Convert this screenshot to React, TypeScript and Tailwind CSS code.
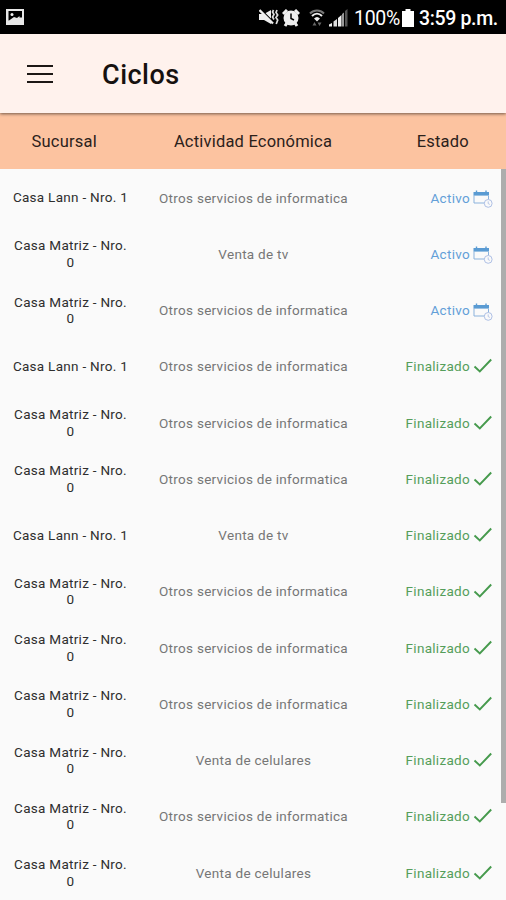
type Status = "Activo" | "Finalizado";

type Cycle = {
  branch: string;
  activity: string;
  status: Status;
};

const LANN = "Casa Lann - Nro. 1";
const MATRIZ = "Casa Matriz - Nro. 0";
const IT = "Otros servicios de informatica";
const TV = "Venta de tv";
const PHONES = "Venta de celulares";

const cycles: Cycle[] = [
  { branch: LANN, activity: IT, status: "Activo" },
  { branch: MATRIZ, activity: TV, status: "Activo" },
  { branch: MATRIZ, activity: IT, status: "Activo" },
  { branch: LANN, activity: IT, status: "Finalizado" },
  { branch: MATRIZ, activity: IT, status: "Finalizado" },
  { branch: MATRIZ, activity: IT, status: "Finalizado" },
  { branch: LANN, activity: TV, status: "Finalizado" },
  { branch: MATRIZ, activity: IT, status: "Finalizado" },
  { branch: MATRIZ, activity: IT, status: "Finalizado" },
  { branch: MATRIZ, activity: IT, status: "Finalizado" },
  { branch: MATRIZ, activity: PHONES, status: "Finalizado" },
  { branch: MATRIZ, activity: IT, status: "Finalizado" },
  { branch: MATRIZ, activity: PHONES, status: "Finalizado" },
];

export default function App() {
  return (
    <div className="flex h-[900px] w-[506px] flex-col overflow-hidden bg-[#fafafa] font-['Roboto',sans-serif] text-black">
      <StatusBar />
      <header className="z-10 flex h-[79px] shrink-0 items-center bg-[#fff2ed] pl-[27px] shadow-[0_1px_3px_rgba(0,0,0,0.55)]">
        <button aria-label="Menu" className="flex h-[18px] w-[26px] flex-col justify-between">
          <span className="h-[2px] w-full bg-[#1c1715]" />
          <span className="h-[2px] w-full bg-[#1c1715]" />
          <span className="h-[2px] w-full bg-[#1c1715]" />
        </button>
        <h1 className="ml-[49px] mt-[3px] text-[27px] font-medium leading-8 tracking-[0.5px] text-[#16110f]">Ciclos</h1>
      </header>

      <div className="flex h-14 shrink-0 items-center bg-[#fcc3a0] pt-[3px] text-center text-[16.5px] tracking-[0.2px] text-[#2b211b]">
        <div className="w-[129px]">Sucursal</div>
        <div className="w-[250px]">Actividad Económica</div>
        <div className="w-[129px] pl-[2px]">Estado</div>
      </div>

      <div className="flex min-h-0 flex-1 overflow-hidden">
        <div className="w-[501px] pt-[0.6px]">
          {cycles.map((cycle, index) => (
            <CycleRow key={index} cycle={cycle} />
          ))}
        </div>
        <div className="h-[634px] w-[5px] bg-[#adadad]" />
      </div>
    </div>
  );
}

function CycleRow({ cycle }: { cycle: Cycle }) {
  const active = cycle.status === "Activo";

  return (
    <div className="flex h-[56.25px] items-center text-[13.5px] tracking-[0.29px]">
      <div className="ml-[10px] w-[121px] text-center leading-[16.5px] text-[#2e2e2e]">{cycle.branch}</div>
      <div className="w-[245px] text-center text-[#767676]">{cycle.activity}</div>
      <div
        className={`flex w-[117px] items-center justify-end tracking-[0.3px] ${active ? "text-[#639fd8]" : "text-[#559e5a]"}`}
      >
        <span className="mr-[3px]">{cycle.status}</span>
        {active ? <CalendarIcon /> : <CheckIcon />}
      </div>
    </div>
  );
}

function CalendarIcon() {
  return (
    <svg width="20" height="20" viewBox="0 0 20 20" fill="none" className="mt-[5px]">
      <path d="M1 5.5V13H12" stroke="#8bb2dc" />
      <path d="M15.5 6V9.5" stroke="#8bb2dc" />
      <path d="M0.5 2H16V5.6H0.5Z" fill="#5a9bd3" />
      <path d="M3.5 0.5V3M13 0.5V3" stroke="#5a9bd3" strokeWidth="1.4" />
      <circle cx="15.2" cy="13.4" r="3.9" fill="#fafafa" stroke="#a5b9e2" strokeWidth="0.9" />
      <path d="M15.2 11.4V13.6L16.8 14.4" stroke="#a5b9e2" strokeWidth="0.8" />
    </svg>
  );
}

function CheckIcon() {
  return (
    <svg width="20" height="18" viewBox="0 0 20 18" fill="none">
      <path d="M1.5 9.5L6.8 14.5L18.2 2.5" stroke="#469a4d" strokeWidth="1.9" />
    </svg>
  );
}

function StatusBar() {
  return (
    <div className="flex h-[34px] shrink-0 items-center bg-black text-white">
      <svg width="18" height="16" viewBox="0 0 18 16" className="ml-[6px]">
        <path d="M0 0H18V16H0Z" fill="#e8e8e8" />
        <path d="M2.5 2H16V8.5H13.5V7L11 9L8 8L3 11.5H2.5Z" fill="#000" />
        <circle cx="6" cy="5.5" r="1.5" fill="#f4f4f4" />
      </svg>

      {/* muted speaker, with the vibration marks on its right */}
      <svg width="20" height="18" viewBox="0 0 20 18" fill="none" className="ml-[235px]">
        <path d="M0 6H5L12 2V16L5 12H0Z" fill="#eee" />
        <path d="M1 1L15 15" stroke="#000" strokeWidth="2" />
        <path d="M0.5 2L14 15.5" stroke="#eee" strokeWidth="2.3" />
        <path d="M14.5 2L13.5 4L15 6.5L13.5 9L15 11.5M18 2L17 4.5L18.7 7L17 9.5L18.7 12L17.2 16" stroke="#ddd" strokeWidth="1.7" />
      </svg>
      <svg width="18" height="18" viewBox="0 0 18 18" fill="none" className="ml-[3px] mt-[2px]">
        <path d="M1 5L5 1M17 5L13 1M3 17L5 14M15 17L13 14" stroke="#eee" strokeWidth="3" />
        <circle cx="9" cy="9" r="7.5" fill="#eee" />
        <path d="M9 4.5V9.5L12 11" stroke="#000" strokeWidth="1.5" />
      </svg>
      <svg width="16" height="18" viewBox="0 0 16 18" fill="none" className="ml-[9px] mt-px">
        <path d="M1 4.5C5 .5 11 .5 15 4.5" stroke="#777" strokeWidth="2" />
        <path d="M3 7C6 4 10 4 13 7" stroke="#eee" strokeWidth="2" />
        <path d="M5 9.5C7 7.5 9 7.5 11 9.5L8 12.5Z" fill="#eee" />
        <path d="M5.5 13L7.5 16.5H3.5ZM10.5 17L8.5 13.5H12.5Z" fill="#666" />
      </svg>
      <svg width="19" height="18" viewBox="0 0 19 18" className="ml-[4px] mt-[2px]">
        <path d="M0 17.5V15.5L3 14V17.5Z" fill="#eee" />
        <path d="M4.5 17.5V12.5L8 10V17.5Z" fill="#ddd" />
        <path d="M9 17.5V9L12.5 6V17.5Z" fill="#eee" />
        <path d="M13 17.5V5L15 3.5V17.5Z" fill="#999" />
        <path d="M16 17.5V2L18.5 0V17.5Z" fill="#555" />
      </svg>
      <span className="ml-[6px] mt-[3px] w-[44px] whitespace-nowrap text-[19.5px] leading-6 tracking-[-0.3px]">100%</span>
      <svg width="12" height="18" viewBox="0 0 12 18" className="ml-[4px] mt-px">
        <path d="M3.5 0H8.5V2H12V18H0V2H3.5Z" fill="#fff" />
      </svg>
      <span className="ml-[5px] mt-[3px] whitespace-nowrap text-[19.5px] font-medium leading-6 tracking-[-0.35px]">3:59 p.m.</span>
    </div>
  );
}
